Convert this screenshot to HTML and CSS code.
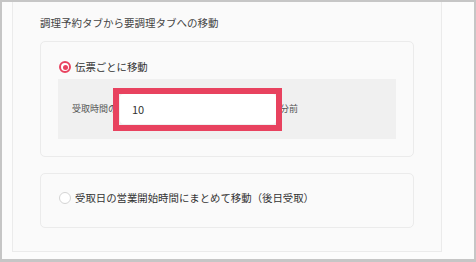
FILE: index.html
```html
<!DOCTYPE html>
<html lang="ja">
<head>
<meta charset="utf-8">
<link rel="stylesheet" href="styles.css">
</head>
<body>
<div class="frame">
  <div class="panel">
    <div class="title">調理予約タブから要調理タブへの移動</div>
    <div class="card card-first">
      <div class="option">
        <span class="radio radio-on"></span>
        <span class="option-text">伝票ごとに移動</span>
      </div>
      <div class="subbox">
        <span class="label">受取時間の</span>
        <div class="input-wrap">
          <div class="input">10</div>
        </div>
        <span class="label unit">分前</span>
      </div>
    </div>
    <div class="card card-second">
      <div class="option">
        <span class="radio"></span>
        <span class="option-text">受取日の営業開始時間にまとめて移動（後日受取）</span>
      </div>
    </div>
  </div>
</div>
</body>
</html>
```

FILE: styles.css
```css
* { box-sizing: border-box; }
html, body { margin: 0; padding: 0; }
body {
  font-family: "Noto Sans CJK JP", "Noto Sans", sans-serif;
  background: #fcfcfc;
}
.frame {
  width: 476px;
  height: 262px;
  border: 2px solid #c6c6c6;
  border-bottom-width: 3px;
  background: #fcfcfc;
  padding: 0 32px 7px 10px;
  display: flex;
}
.panel {
  flex: 1;
  border: 1px solid #ebebeb;
  border-top: none;
  background: #fafafa;
  padding: 13px 27px 0 27px;
}
.title {
  font-size: 10.5px;
  line-height: 16px;
  color: #444;
  height: 16px;
  margin-bottom: 10px;
}
.card {
  border: 1px solid #ebebeb;
  border-radius: 5px;
  background: #fafafa;
}
.card-first {
  padding: 17px 17px 17px 17px;
}
.card-second {
  margin-top: 16px;
  padding: 16px 17px 21px 17px;
}
.option {
  display: flex;
  align-items: center;
  height: 16px;
  padding-left: 1px;
}
.radio {
  width: 12px;
  height: 12px;
  border-radius: 50%;
  border: 1px solid #d4d4d4;
  background: #fff;
  flex: none;
  display: flex;
  align-items: center;
  justify-content: center;
}
.radio-on {
  border: 2px solid #e8425f;
}
.radio-on::after {
  content: "";
  width: 5px;
  height: 5px;
  border-radius: 50%;
  background: #e8425f;
}
.option-text {
  margin-left: 4px;
  font-size: 10.4px;
  line-height: 16px;
  color: #333;
}
.subbox {
  margin-top: 4px;
  height: 60px;
  background: #f0f0f0;
  display: flex;
  align-items: center;
  padding-left: 14px;
}
.label {
  font-size: 9px;
  color: #555;
  line-height: 14px;
  white-space: nowrap;
}
.input-wrap {
  position: relative;
  margin-left: 3px;
}
.input {
  width: 156px;
  height: 30px;
  background: #fff;
  border-radius: 4px;
  font-size: 11px;
  line-height: 30px;
  color: #333;
  padding-left: 12px;
}
.input-wrap::after {
  content: "";
  position: absolute;
  left: -7px;
  top: -6px;
  right: -6px;
  bottom: -7px;
  border: 6px solid #e8425f;
}
.unit {
  margin-left: 4px;
}
```
